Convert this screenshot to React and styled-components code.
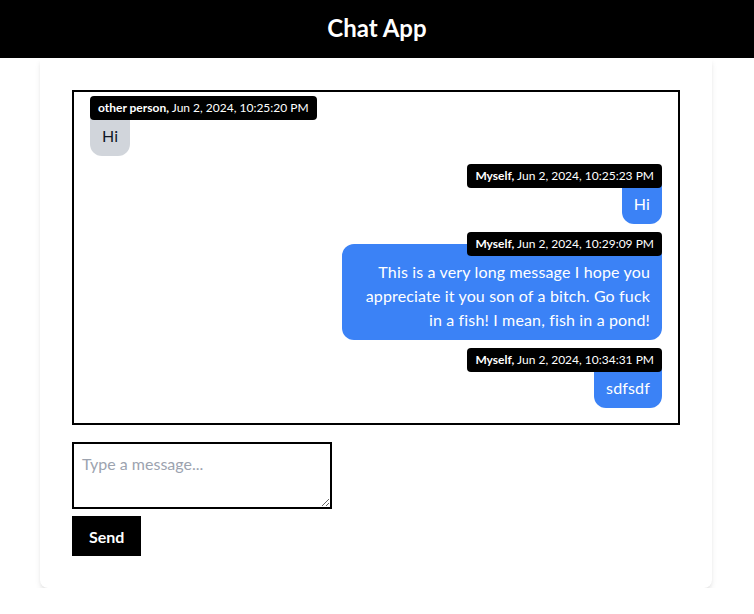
import React from "react";
import styled, { createGlobalStyle } from "styled-components";

const messages = [
  { id: 1, sender: "other person", mine: false, time: "Jun 2, 2024, 10:25:20 PM", text: "Hi" },
  { id: 2, sender: "Myself", mine: true, time: "Jun 2, 2024, 10:25:23 PM", text: "Hi" },
  {
    id: 3,
    sender: "Myself",
    mine: true,
    time: "Jun 2, 2024, 10:29:09 PM",
    text: "This is a very long message I hope you appreciate it you son of a bitch. Go fuck in a fish! I mean, fish in a pond!",
  },
  { id: 4, sender: "Myself", mine: true, time: "Jun 2, 2024, 10:34:31 PM", text: "sdfsdf" },
];

export default function App() {
  return (
    <>
      <GlobalStyle />
      <Header>Chat App</Header>
      <Card>
        <ChatBox>
          {messages.map((m) => (
            <MessageRow key={m.id} $mine={m.mine}>
              <Bubble $mine={m.mine}>
                <Meta $mine={m.mine}>
                  <b>{m.sender},</b> {m.time}
                </Meta>
                {m.text}
              </Bubble>
            </MessageRow>
          ))}
        </ChatBox>

        <Composer>
          <TextArea placeholder="Type a message..." />
          <SendButton>Send</SendButton>
        </Composer>
      </Card>
    </>
  );
}

const GlobalStyle = createGlobalStyle`
  * {
    box-sizing: border-box;
  }

  body {
    margin: 0;
    background: #ffffff;
    font-family: "Segoe UI", Lato, "Liberation Sans", sans-serif;
    color: #111827;
  }
`;

const Header = styled.header`
  height: 58px;
  padding-bottom: 3px;

  display: flex;
  justify-content: center;
  align-items: center;

  background-color: #000;
  color: #fff;

  font-size: 24px;
  font-weight: bold;
`;

const Card = styled.main`
  width: 672px;
  margin: 0 auto 0 40px;

  display: flex;
  flex-direction: column;

  padding: 32px;

  background-color: #fff;
  border-radius: 0 0 8px 8px;
  box-shadow: 0 4px 6px -1px rgba(0, 0, 0, 0.1), 0 2px 4px -2px rgba(0, 0, 0, 0.1);
`;

const ChatBox = styled.div`
  height: 335px;
  overflow-y: auto;

  display: flex;
  flex-direction: column;
  gap: 20px;

  padding: 16px;

  border: 2px solid #000;
`;

const MessageRow = styled.div`
  display: flex;
  justify-content: ${(p) => (p.$mine ? "flex-end" : "flex-start")};
`;

const Bubble = styled.div`
  position: relative;

  max-width: 320px;
  padding: 16px 12px 8px;

  border-radius: 12px;

  background-color: ${(p) => (p.$mine ? "#3b82f6" : "#d1d5db")};
  color: ${(p) => (p.$mine ? "#fff" : "#111827")};

  font-size: 16px;
  line-height: 24px;
  letter-spacing: 0.15px;
  text-align: ${(p) => (p.$mine ? "right" : "left")};
`;

const Meta = styled.div`
  position: absolute;
  top: -12px;
  ${(p) => (p.$mine ? "right: 0;" : "left: 0;")}

  padding: 4px 8px;

  background-color: #000;
  color: #fff;
  border-radius: 4px;

  font-size: 12px;
  line-height: 16px;
  letter-spacing: 0;
  white-space: nowrap;

  & b {
    font-weight: bold;
  }
`;

const Composer = styled.div`
  display: flex;
  flex-direction: column;
  align-items: flex-start;
  gap: 7px;

  margin-top: 17px;
`;

const TextArea = styled.textarea`
  width: 260px;
  height: 67px;

  padding: 8px;

  border: 2px solid #000;
  border-radius: 0;
  outline: none;

  font-family: inherit;
  font-size: 16px;
  line-height: 24px;

  &::placeholder {
    color: #9ca3af;
  }
`;

const SendButton = styled.button`
  height: 40px;
  padding: 0 17px;

  border: none;
  background-color: #000;
  color: #fff;

  font-family: inherit;
  font-size: 16px;
  font-weight: bold;
  cursor: pointer;
`;
